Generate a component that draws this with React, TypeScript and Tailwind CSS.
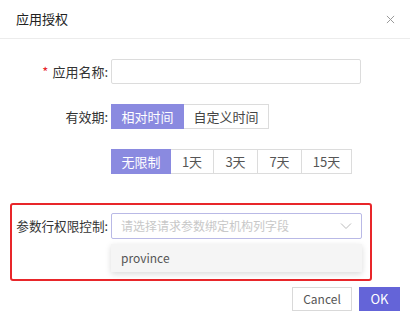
import React from 'react';

const font = { fontFamily: '"Noto Sans CJK SC", "Noto Sans", sans-serif' };

const days = ['无限制', '1天', '3天', '7天', '15天'];
const dayWidths = ['w-[60px]', 'w-[43px]', 'w-[44px]', 'w-[44px]', 'w-[50px]'];

export default function App() {
  return (
    <div className="w-[410px] h-[316px] bg-white overflow-hidden text-[#333]" style={font}>
      {/* header */}
      <div className="h-[39px] flex items-center justify-between pl-4 pr-[15px] border-b border-[#ececec]">
        <span className="text-[13px] text-[#222]">应用授权</span>
        <svg width="9" height="9" viewBox="0 0 10 10" className="text-[#999]">
          <path d="M1 1L9 9M9 1L1 9" stroke="currentColor" strokeWidth="1.1" />
        </svg>
      </div>

      {/* name */}
      <div className="flex items-center mt-[20px]">
        <label className="w-[111px] pr-[3px] text-right text-[13px] leading-none">
          <span className="text-[#e8262a] mr-1">*</span>应用名称:
        </label>
        <div className="w-[250px] h-[25px] border border-[#dcdcdc] rounded-[2px]" />
      </div>

      {/* validity */}
      <div className="flex items-center mt-[20px]">
        <label className="w-[111px] pr-[3px] text-right text-[13px] leading-none">有效期:</label>
        <div className="flex h-[25px] text-[13px]">
          <div className="w-[73px] flex items-center justify-center bg-[#8a8ae0] text-white">相对时间</div>
          <div className="w-[85px] flex items-center justify-center border border-l-0 border-[#dcdcdc] text-[#444]">自定义时间</div>
        </div>
      </div>

      <div className="flex items-center mt-[20px] pl-[111px]">
        <div className="flex h-[25px] text-[13px]">
          {days.map((d, i) => (
            <div
              key={d}
              className={`${dayWidths[i]} flex items-center justify-center ${
                i === 0
                  ? 'bg-[#8a8ae0] text-white'
                  : 'border border-l-0 border-[#dcdcdc] text-[#555]'
              }`}
            >
              {d}
            </div>
          ))}
        </div>
      </div>

      {/* highlighted row permission block */}
      <div className="ml-[10px] w-[362px] mt-[29px] border-2 border-[#e8262a] rounded-[3px] pt-[8px] pb-[7px]">
        <div className="flex items-center">
          <label className="w-[99px] pr-[3px] text-right text-[12.6px] leading-none whitespace-nowrap">参数行权限控制:</label>
          <div className="w-[251px] h-[26px] border border-[#b9b9e6] rounded-[2px] flex items-center justify-between pl-[9px] pr-[9px]">
            <span className="text-[12px] text-[#c8c8c8]">请选择请求参数绑定机构列字段</span>
            <svg width="12" height="8" viewBox="0 0 12 8" className="text-[#bbb]">
              <path d="M1 1.5L6 6.5L11 1.5" fill="none" stroke="currentColor" strokeWidth="1" />
            </svg>
          </div>
        </div>
        <div className="ml-[99px] mt-[5px] w-[251px] h-[28px] bg-[#f5f5f5] shadow-[0_2px_6px_rgba(0,0,0,0.15)] flex items-center pl-[10px] text-[12px] text-[#555]">
          province
        </div>
      </div>

      {/* footer */}
      <div className="flex justify-end gap-[7px] pr-[10px] mt-[6px]">
        <button className="w-[60px] h-[24px] border border-[#d9d9d9] text-[12px] text-[#555] bg-white">Cancel</button>
        <button className="w-[41px] h-[24px] bg-[#6464d8] text-white text-[13px]">OK</button>
      </div>
    </div>
  );
}
